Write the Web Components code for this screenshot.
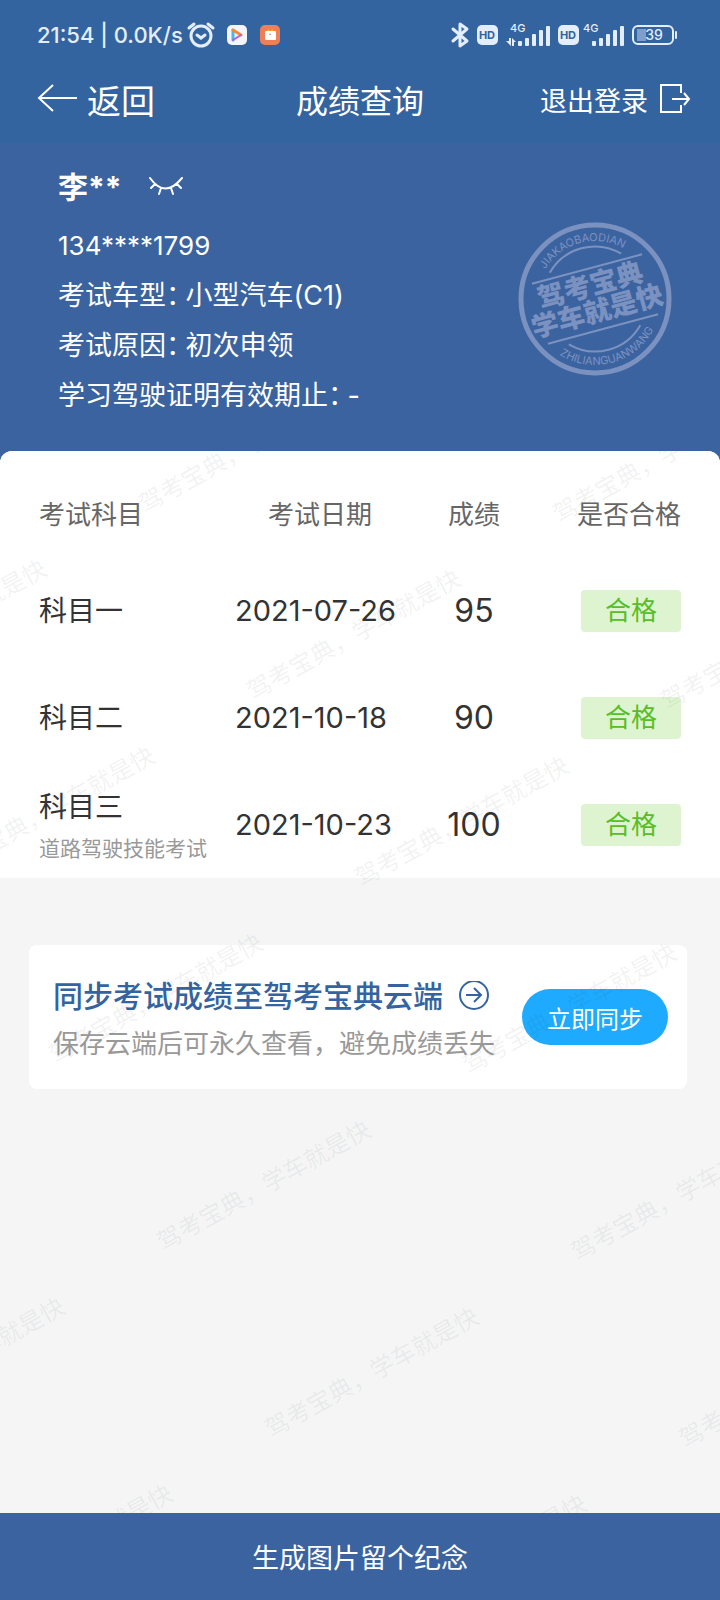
<!DOCTYPE html>
<html lang="zh-CN">
<head>
<meta charset="utf-8">
<meta name="viewport" content="width=device-width, initial-scale=1">
<title>成绩查询</title>
<style>
  html, body {
    margin: 0;
    padding: 0;
  }

  body {
    font-family: Inter, "Noto Sans CJK SC", sans-serif;
    font-size: 27px;
    color: #333;
    --blue-top: #34649f;
    --blue: #3b63a0;
    --gray-bg: #f5f5f5;
  }
</style>
</head>
<body>

<score-page>
  <status-bar slot="top" time="21:54" speed="0.0K/s" battery="39"></status-bar>
  <nav-header slot="top" back="返回" logout="退出登录">成绩查询</nav-header>

  <profile-card slot="top" name="李**" phone="134****1799">
    <span data-info data-label="考试车型：">小型汽车(C1)</span>
    <span data-info data-label="考试原因：">初次申领</span>
    <span data-info data-label="学习驾驶证明有效期止：">-</span>
  </profile-card>

  <score-table>
    <span data-score data-subject="科目一" data-date="2021-07-26" data-value="95" data-result="合格"></span>
    <span data-score data-subject="科目二" data-date="2021-10-18" data-value="90" data-result="合格"></span>
    <span data-score data-subject="科目三" data-note="道路驾驶技能考试" data-date="2021-10-23" data-value="100" data-result="合格"></span>
  </score-table>

  <sync-card>
    <span slot="title">同步考试成绩至驾考宝典云端</span>
    <span slot="note">保存云端后可永久查看，避免成绩丢失</span>
    <span slot="action">立即同步</span>
  </sync-card>

  <water-mark text="驾考宝典，学车就是快"></water-mark>

  <bottom-action slot="bottom">生成图片留个纪念</bottom-action>
</score-page>

<script>
// ===== PAGE =====
class ScorePage extends HTMLElement {
  constructor() {
    super();
    this.attachShadow({ mode: 'open' });
    this.shadowRoot.innerHTML = `
      <style>
        :host {
          display: flex;
          flex-direction: column;
          min-height: 100vh;
          background: var(--blue);
        }

        main {
          position: relative;
          flex: 1;
          overflow: hidden;
          background: var(--gray-bg);
          border-radius: 12px 12px 0 0;
        }
      </style>
      <slot name="top"></slot>
      <main><slot></slot></main>
      <slot name="bottom"></slot>
    `;
  }
}

// ===== STATUS BAR =====
class StatusBar extends HTMLElement {
  constructor() {
    super();
    this.attachShadow({ mode: 'open' });
  }

  connectedCallback() {
    this.render();
  }

  hdIcon() {
    return `
      <svg width="21" height="20" viewBox="0 0 21 20" aria-hidden="true">
        <rect width="21" height="20" rx="5" fill="#e3edfb"/>
        <text x="10" y="14" text-anchor="middle" font-size="11" font-weight="700" fill="#34649f">HD</text>
      </svg>`;
  }

  signalIcon(arrows) {
    const left = arrows ? 12 : 9;
    const bars = [5, 8, 12, 16, 20].map((h, i) =>
      `<rect x="${left + i * 7}" y="${23 - h}" width="4" height="${h}" rx="1"/>`
    ).join('');
    const width = left + 32;
    return `
      <svg width="${width}" height="24" viewBox="0 0 ${width} 24" fill="#e3edfb" aria-hidden="true">
        <text x="${arrows ? 4 : 0}" y="9" font-size="11" font-weight="500">4G</text>
        ${arrows ? '<path d="M0 18h3v-3h2v8zM6 15l4 4H8v4H6z"/>' : ''}
        ${bars}
      </svg>`;
  }

  render() {
    this.shadowRoot.innerHTML = `
      <style>
        :host {
          display: flex;
          align-items: center;
          justify-content: space-between;
          height: 70px;
          padding: 0 42px 0 37px;
          background: var(--blue-top);
          color: #e3edfb;
          font-size: 22px;
          font-weight: 500;
        }

        .side {
          display: flex;
          align-items: center;
        }

        .apps {
          display: flex;
          gap: 13px;
          margin-left: 12px;
        }

        .right {
          gap: 8px;
        }

        .sim {
          display: flex;
          align-items: center;
          gap: 4px;
        }

        .alarm {
          margin-left: 5px;
        }

        svg {
          display: block;
          overflow: visible;
        }
      </style>
      <div class="side">
        <span>${this.getAttribute('time')} | ${this.getAttribute('speed')}</span>
        <svg class="alarm" width="27" height="25" viewBox="0 0 27 25" fill="none" stroke="#e3edfb" stroke-width="3" stroke-linecap="round" aria-hidden="true">
          <circle cx="13" cy="13" r="10"/>
          <path d="M1 5l5-4M20 1l5 4"/>
          <path d="M9 12l4 3 4-3"/>
        </svg>
        <div class="apps" aria-hidden="true">
          <svg width="20" height="20" viewBox="0 0 20 20">
            <rect width="20" height="20" rx="5" fill="#f3f5fb"/>
            <path d="M6 5v10" stroke="#49b6ea" stroke-width="3" stroke-linecap="round"/>
            <path d="M6 5l8 5" stroke="#f58a2e" stroke-width="3" stroke-linecap="round"/>
            <path d="M14 10l-8 5" stroke="#b45bea" stroke-width="2" stroke-linecap="round"/>
          </svg>
          <svg width="20" height="20" viewBox="0 0 20 20">
            <rect width="20" height="20" rx="5" fill="#ee7f57"/>
            <path d="M7 7l1-3 2 2 3-2v3" fill="#f9b43c"/>
            <rect x="5" y="6" width="11" height="9" rx="1" fill="#fff"/>
            <path d="M9 9q1 1 2 0" stroke="#ee7f57" fill="none"/>
          </svg>
        </div>
      </div>
      <div class="side right">
        <svg width="18" height="26" viewBox="0 0 18 26" fill="none" stroke="#e3edfb" stroke-width="3" stroke-linecap="round" stroke-linejoin="round" aria-hidden="true">
          <path d="M2 7l14 12-7 5V2l7 5L2 19"/>
        </svg>
        ${this.hdIcon()}
        ${this.signalIcon(true)}
        <div class="sim">
          ${this.hdIcon()}
          ${this.signalIcon(false)}
        </div>
        <svg width="46" height="20" viewBox="0 0 46 20" aria-label="电量">
          <rect x="1" y="1" width="40" height="18" rx="5" fill="none" stroke="#e3edfb" stroke-width="2"/>
          <path d="M5 4h9v12H5z" fill="#7f9fca"/>
          <path d="M44 7v6" stroke="#e3edfb" stroke-width="2" stroke-linecap="round"/>
          <text x="22" y="15" text-anchor="middle" font-size="14" fill="#e3edfb">${this.getAttribute('battery')}</text>
        </svg>
      </div>
    `;
  }
}

// ===== NAV HEADER =====
class NavHeader extends HTMLElement {
  constructor() {
    super();
    this.attachShadow({ mode: 'open' });
  }

  connectedCallback() {
    this.shadowRoot.innerHTML = `
      <style>
        :host {
          display: block;
          background: var(--blue-top);
          color: #fff;
        }

        nav {
          display: grid;
          grid-template-columns: 1fr auto 1fr;
          align-items: center;
          height: 58px;
          padding: 0 29px 15px;
        }

        h1 {
          margin: 0;
          font-size: 32px;
          font-weight: 400;
        }

        button {
          display: flex;
          align-items: center;
          padding: 0;
          border: 0;
          background: none;
          color: inherit;
          font: inherit;
          cursor: pointer;
        }

        .back {
          gap: 9px;
          padding-left: 8px;
          font-size: 34px;
        }

        .logout {
          justify-self: end;
          gap: 12px;
        }
      </style>
      <nav>
        <button type="button" class="back">
          <svg width="41" height="30" viewBox="0 0 41 30" fill="none" stroke="currentColor" stroke-width="2" aria-hidden="true">
            <path d="M16 1L2 14l14 13M2 14h38"/>
          </svg>
          ${this.getAttribute('back')}
        </button>
        <h1><slot></slot></h1>
        <button type="button" class="logout">
          ${this.getAttribute('logout')}
          <svg width="31" height="30" viewBox="0 0 31 30" fill="none" stroke="currentColor" stroke-width="2" aria-hidden="true">
            <path d="M21 9V1H1v27h20v-7M12 15h17M24 9l5 6-5 6"/>
          </svg>
        </button>
      </nav>
    `;
  }
}

// ===== PROFILE =====
class ProfileCard extends HTMLElement {
  constructor() {
    super();
    this.attachShadow({ mode: 'open' });
  }

  getInfo() {
    return Array.from(this.querySelectorAll('[data-info]')).map(item => ({
      label: item.getAttribute('data-label'),
      value: item.textContent
    }));
  }

  connectedCallback() {
    this.shadowRoot.innerHTML = `
      <style>
        :host {
          display: flex;
          align-items: center;
          justify-content: space-between;
          padding: 20px 48px 30px 58px;
          background: var(--blue);
          color: #fff;
          line-height: 50px;
        }

        .name {
          display: flex;
          align-items: center;
          gap: 26px;
          margin-bottom: 10px;
          line-height: 48px;
        }

        h2 {
          margin: 0;
          font-size: 30px;
          font-weight: 700;
        }

        button {
          display: flex;
          padding: 0;
          border: 0;
          background: none;
          color: inherit;
          cursor: pointer;
        }

        p, dl, dd {
          margin: 0;
        }

        p {
          font-size: 26px;
        }

        dl div {
          display: flex;
          gap: 6px;
        }

        /* half-width colon */
        dt {
          font-feature-settings: "halt";
        }

        stamp-badge {
          margin-top: 14px;
        }
      </style>
      <div>
        <div class="name">
          <h2>${this.getAttribute('name')}</h2>
          <button type="button" aria-label="显示">
            <svg width="36" height="20" viewBox="0 0 36 20" fill="none" stroke="currentColor" stroke-width="2" stroke-linecap="round">
              <path d="M2 1q15 21 32 0M7 7l-4 4M13 11l-2 6M23 11l2 6M29 7l4 4"/>
            </svg>
          </button>
        </div>
        <p>${this.getAttribute('phone')}</p>
        <dl>
          ${this.getInfo().map(info => `
            <div><dt>${info.label}</dt><dd>${info.value}</dd></div>
          `).join('')}
        </dl>
      </div>
      <stamp-badge></stamp-badge>
    `;
  }
}

// Round seal, everything inside is tilted by 15 degrees
class StampBadge extends HTMLElement {
  constructor() {
    super();
    this.attachShadow({ mode: 'open' });
    this.shadowRoot.innerHTML = `
      <style>
        :host {
          display: block;
          flex: none;
        }

        svg {
          display: block;
        }
      </style>
      <svg width="154" height="154" viewBox="-77 -77 154 154" fill="none" stroke="#7b92c1" stroke-width="2">
        <defs>
          <path id="upper" d="M-58 0A58 58 0 0 1 58 0"/>
          <path id="lower" d="M-66 0A66 66 0 0 0 66 0"/>
        </defs>
        <circle r="74" stroke-width="5"/>
        <g transform="rotate(-15)">
          <path d="M-37 -37A52 52 0 0 1 37 -37M-37 37A52 52 0 0 0 37 37"/>
          <path d="M-57 -31H57M-57 31H57"/>
          <g fill="#7b92c1" stroke="none" text-anchor="middle">
            <g font-size="11">
              <text><textPath href="#upper" startOffset="50%">JIAKAOBAODIAN</textPath></text>
              <text><textPath href="#lower" startOffset="50%">ZHILIANGUANWANG</textPath></text>
            </g>
            <g font-size="27" font-weight="900">
              <text x="-1" y="-5">驾考宝典</text>
              <text x="-1" y="22">学车就是快</text>
            </g>
          </g>
        </g>
      </svg>
    `;
  }
}

// ===== SCORE TABLE =====
class ScoreTable extends HTMLElement {
  constructor() {
    super();
    this.attachShadow({ mode: 'open' });
  }

  getScores() {
    return Array.from(this.querySelectorAll('[data-score]')).map(item => item.dataset);
  }

  connectedCallback() {
    this.shadowRoot.innerHTML = `
      <style>
        :host {
          display: block;
          padding: 16px 39px 0;
          background: #fff;
        }

        table {
          width: 100%;
          border-collapse: collapse;
          table-layout: fixed;
        }

        th, td {
          padding: 0;
          text-align: center;
          white-space: nowrap;
        }

        thead th {
          height: 90px;
          color: #666;
          font-size: 26px;
          font-weight: 400;
        }

        tbody th, tbody td {
          height: 107px;
        }

        tr > :first-child {
          width: 196px;
          text-align: left;
        }

        thead th:nth-child(2) {
          width: 170px;
        }

        tr > :last-child {
          text-align: right;
        }

        tbody .subject {
          font-size: 28px;
          font-weight: 400;
          line-height: 48px;
        }

        .subject small {
          display: block;
          color: #999;
          font-size: 21px;
          line-height: 36px;
        }

        tbody .date {
          font-size: 29px;
          text-align: left;
        }

        .value {
          font-size: 32px;
        }

        .badge {
          display: inline-block;
          width: 100px;
          border-radius: 4px;
          background: #def4d1;
          color: #58bd27;
          font-size: 26px;
          line-height: 42px;
          text-align: center;
          vertical-align: middle;
        }
      </style>
      <table>
        <thead>
          <tr><th>考试科目</th><th>考试日期</th><th>成绩</th><th>是否合格</th></tr>
        </thead>
        <tbody>
          ${this.getScores().map(score => `
            <tr>
              <th class="subject" scope="row">${score.subject}${score.note ? `<small>${score.note}</small>` : ''}</th>
              <td class="date">${score.date}</td>
              <td class="value">${score.value}</td>
              <td><span class="badge">${score.result}</span></td>
            </tr>
          `).join('')}
        </tbody>
      </table>
    `;
  }
}

// ===== CLOUD SYNC =====
class SyncCard extends HTMLElement {
  constructor() {
    super();
    this.attachShadow({ mode: 'open' });
    this.shadowRoot.innerHTML = `
      <style>
        :host {
          display: flex;
          align-items: center;
          justify-content: space-between;
          height: 144px;
          margin: 67px 33px 32px 29px;
          padding: 0 19px 0 24px;
          box-sizing: border-box;
          border-radius: 8px;
          background: #fff;
          white-space: nowrap;
        }

        a {
          display: flex;
          align-items: center;
          gap: 16px;
          color: #34649f;
          font-size: 30px;
          font-weight: 500;
          line-height: 54px;
          text-decoration: none;
        }

        p {
          margin: 0;
          color: #999;
          font-size: 26px;
          line-height: 42px;
        }

        button {
          flex: none;
          width: 146px;
          height: 56px;
          padding: 0;
          border: 0;
          border-radius: 28px;
          background: #1daaff;
          color: #fff;
          font: inherit;
          font-size: 24px;
          cursor: pointer;
        }
      </style>
      <div>
        <a href="#sync">
          <slot name="title"></slot>
          <svg width="30" height="30" viewBox="0 0 30 30" fill="none" stroke="currentColor" stroke-width="2" aria-hidden="true">
            <circle cx="15" cy="14" r="14"/>
            <path d="M7 14h15M15 7l7 7-7 7"/>
          </svg>
        </a>
        <p><slot name="note"></slot></p>
      </div>
      <button type="button"><slot name="action"></slot></button>
    `;
  }
}

// ===== WATERMARK =====
// Tilted text repeated on a skewed grid over the whole content area
class WaterMark extends HTMLElement {
  constructor() {
    super();
    this.attachShadow({ mode: 'open' });
  }

  connectedCallback() {
    const text = this.getAttribute('text');
    const marks = [];
    for (let row = -2; row <= 4; row++) {
      for (let col = -1; col <= 2; col++) {
        const x = 48 + row * 108 + col * 414;
        const y = 361 + row * 187 + col * 10;
        // skip the ones that fall outside
        if (x > -110 && x < 830 && y > -50) {
          marks.push(`<span style="left:${x}px;top:${y}px">${text}</span>`);
        }
      }
    }

    this.shadowRoot.innerHTML = `
      <style>
        :host {
          position: absolute;
          inset: 0;
          overflow: hidden;
          pointer-events: none;
        }

        span {
          position: absolute;
          color: rgba(50, 60, 75, 0.07);
          font-size: 24px;
          line-height: 32px;
          white-space: nowrap;
          transform: translate(-50%, -50%) rotate(-29deg);
        }
      </style>
      ${marks.join('')}
    `;
    this.setAttribute('aria-hidden', 'true');
  }
}

// ===== BOTTOM BUTTON =====
class BottomAction extends HTMLElement {
  constructor() {
    super();
    this.attachShadow({ mode: 'open' });
    this.shadowRoot.innerHTML = `
      <style>
        :host {
          display: block;
        }

        button {
          display: block;
          width: 100%;
          height: 87px;
          padding: 0;
          border: 0;
          background: var(--blue);
          color: #fff;
          font: inherit;
          cursor: pointer;
        }
      </style>
      <button type="button"><slot></slot></button>
    `;
  }
}

customElements.define('score-page', ScorePage);
customElements.define('status-bar', StatusBar);
customElements.define('nav-header', NavHeader);
customElements.define('stamp-badge', StampBadge);
customElements.define('profile-card', ProfileCard);
customElements.define('score-table', ScoreTable);
customElements.define('sync-card', SyncCard);
customElements.define('water-mark', WaterMark);
customElements.define('bottom-action', BottomAction);
</script>
</body>
</html>
